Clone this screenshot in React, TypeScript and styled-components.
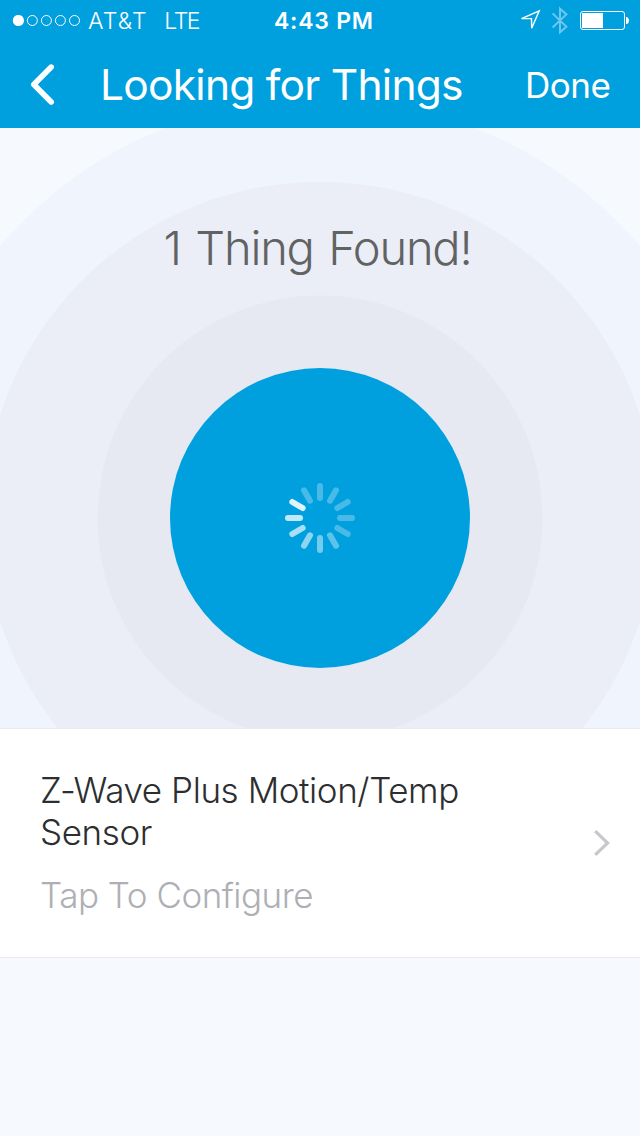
import React from "react";
import styled, { createGlobalStyle } from "styled-components";

const Global = createGlobalStyle`
  * { box-sizing: border-box; }
  html, body { margin: 0; padding: 0; }
  body { background: #f6faff; font-family: Inter, "Liberation Sans", sans-serif; }
`;

const Screen = styled.main`
  width: 640px;
  height: 1136px;
  display: flex;
  flex-direction: column;
  overflow: hidden;
  background: #f6faff;
`;

const Header = styled.header`
  height: 128px;
  flex: none;
  background: #00a0df;
  color: #fff;
`;

const StatusBar = styled.div`
  display: grid;
  grid-template: 41px / 240px 1fr 240px;
  align-items: center;
  font-size: 23px;
  line-height: 40px;
  white-space: nowrap;
`;

const Carrier = styled.div`
  display: flex;
  align-items: center;
  padding: 1px 0 0 12px;
  font-weight: 300;
`;

const CarrierName = styled.span`
  margin-left: 7px;
  letter-spacing: 1.2px;
`;

const Network = styled.span`
  margin-left: 16.5px;
  letter-spacing: -1.5px;
`;

const Clock = styled.div`
  padding: 1px 0 0 34px;
  font-weight: 600;
  letter-spacing: 0.75px;
`;

const StatusIcons = styled.div`
  display: flex;
  justify-content: flex-end;
  padding-right: 10px;
`;

const NavBar = styled.nav`
  display: flex;
  align-items: center;
  height: 87px;
  padding-left: 28px;
`;

const IconButton = styled.button`
  display: flex;
  padding: 0;
  border: 0;
  background: none;
`;

const Title = styled.h1`
  width: 426px;
  margin: 0 0 0 41px;
  font-size: 42.5px;
  font-weight: 400;
  letter-spacing: -0.74px;
  line-height: 50px;
  white-space: nowrap;
`;

const DoneButton = styled.button`
  margin: 0 0 0 -1px;
  padding: 0;
  border: 0;
  background: none;
  color: inherit;
  font: 400 35px/42px Inter, "Liberation Sans", sans-serif;
  letter-spacing: -0.5px;
`;

const Radar = styled.section`
  display: grid;
  grid-template: 600px / 640px;
  flex: none;
  overflow: hidden;
`;

const RadarArt = styled.svg`
  grid-area: 1 / 1;
`;

const Found = styled.h2`
  grid-area: 1 / 1;
  z-index: 1;
  margin: 91px 0 0 -5px;
  font-size: 47px;
  font-weight: 300;
  letter-spacing: -1.2px;
  word-spacing: 2.4px;
  line-height: 57px;
  text-align: center;
  color: #616264;
  white-space: nowrap;
`;

const DeviceRow = styled.article`
  display: flex;
  align-items: center;
  justify-content: space-between;
  height: 230px;
  flex: none;
  padding: 0 28px 0 40px;
  border-top: 1px solid #e9ebef;
  border-bottom: 1px solid #e9ebef;
  background: #fff;
`;

const DeviceText = styled.div`
  width: 460px;
  margin-top: -2px;
  font-size: 35px;
  font-weight: 300;
  line-height: 42px;
`;

const DeviceName = styled.div`
  color: #2d2e30;
  letter-spacing: -0.42px;
`;

const Hint = styled.div`
  margin-top: 21px;
  color: #aeafb5;
  letter-spacing: -0.5px;
`;

const spokes = [0.28, 0.28, 0.28, 0.28, 0.28, 0.37, 0.46, 0.56, 0.66, 0.76, 0.87, 0.28];

export default function App() {
  return (
    <Screen>
      <Global />
      <Header>
        <StatusBar>
          <Carrier>
            <svg width="69" height="12" viewBox="12 15.2 69 12">
              <circle cx="18.4" cy="20.7" r="5.6" fill="#fff" />
              {[32.3, 46.4, 60.4, 74.5].map((x) => (
                <circle key={x} cx={x} cy="20.7" r="5" fill="none" stroke="#fff" />
              ))}
            </svg>
            <CarrierName>AT&amp;T</CarrierName>
            <Network>LTE</Network>
          </Carrier>
          <Clock>4:43 PM</Clock>
          <StatusIcons>
            <svg width="112" height="41" viewBox="518 0 112 41" fill="none" stroke="#fff">
              <path d="M539.2 10.8 L521.5 18.6 L531.5 18.6 L531.7 28.2 Z" strokeWidth="1.4" />
              <path d="M552.6 13.4 L566.4 26.7 L560 32.2 V8.8 L566.4 14.4 L552.6 27.4" strokeWidth="2" opacity="0.42" />
              <rect x="580.5" y="11.5" width="44" height="18" rx="2.5" />
              <path d="M582 13 H603 V28 H582 Z" fill="#fff" stroke="none" />
              <path d="M626 17 H627 Q629 18 629 20.5 Q629 23 627 24 H626 Z" fill="#fff" stroke="none" />
            </svg>
          </StatusIcons>
        </StatusBar>
        <NavBar>
          <IconButton aria-label="Back">
            <svg width="31" height="46" viewBox="28 61.5 31 46" fill="none" stroke="#fff" strokeWidth="5.6" strokeLinecap="round" strokeLinejoin="round">
              <path d="M51.2 66.6 L33.8 84 L51.2 101.4" />
            </svg>
          </IconButton>
          <Title>Looking for Things</Title>
          <DoneButton>Done</DoneButton>
        </NavBar>
      </Header>
      <Radar>
        <RadarArt width="640" height="600" viewBox="0 128 640 600">
          <circle cx="320" cy="518" r="420" fill="#f0f4fd" />
          <circle cx="320" cy="518" r="336.2" fill="#ebeef6" />
          <circle cx="320" cy="518" r="222.5" fill="#e6e9f1" />
          <circle cx="320" cy="518" r="150" fill="#00a0df" />
          {spokes.map((opacity, i) => (
            <rect
              key={i}
              x="317"
              y="483"
              width="6"
              height="18"
              rx="3"
              fill="#fff"
              opacity={opacity}
              transform={`rotate(${i * 30} 320 518)`}
            />
          ))}
        </RadarArt>
        <Found>1 Thing Found!</Found>
      </Radar>
      <DeviceRow>
        <DeviceText>
          <DeviceName>Z-Wave Plus Motion/Temp Sensor</DeviceName>
          <Hint>Tap To Configure</Hint>
        </DeviceText>
        <svg width="20" height="32" viewBox="592 827 20 32" fill="none" stroke="#c7c7cc" strokeWidth="3.2">
          <path d="M595.2 831.2 L607.6 843 L595.2 854.8" />
        </svg>
      </DeviceRow>
    </Screen>
  );
}
